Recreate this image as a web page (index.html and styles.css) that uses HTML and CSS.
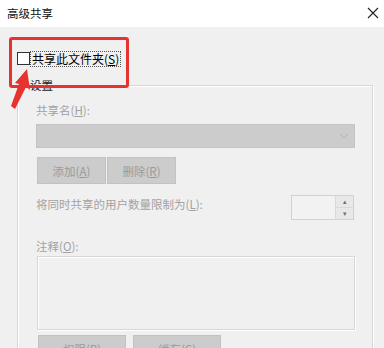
FILE: index.html
```html
<!DOCTYPE html>
<html lang="zh-CN">
<head>
    <meta charset="UTF-8">
    <meta name="viewport" content="width=device-width, initial-scale=1.0">
    <title>高级共享</title>
    <link rel="stylesheet" href="styles.css">
</head>
<body>
    <div class="titlebar">
        <span class="title">高级共享</span>
        <svg class="close" width="12" height="12" viewBox="0 0 12 12">
            <path d="M1 1 L11 11 M11 1 L1 11" stroke="#222" stroke-width="1.1" fill="none"/>
        </svg>
    </div>

    <div class="content">
        <div class="share">
            <span class="check"></span>
            <span class="share-label">共享此文件夹(<u>S</u>)</span>
        </div>

        <fieldset class="group">
            <legend>设置</legend>

            <div class="label">共享名(<u>H</u>):</div>
            <div class="combo">
                <svg width="10" height="6" viewBox="0 0 10 6">
                    <path d="M1 1 L5 5 L9 1" stroke="#b4b4b4" stroke-width="1" fill="none"/>
                </svg>
            </div>

            <div class="btns">
                <div class="btn">添加(<u>A</u>)</div>
                <div class="btn">删除(<u>R</u>)</div>
            </div>

            <div class="limit">
                <span class="label">将同时共享的用户数量限制为(<u>L</u>):</span>
                <div class="spin">
                    <div class="spin-field"></div>
                    <div class="spin-arrows">
                        <span>&#9652;</span>
                        <span>&#9662;</span>
                    </div>
                </div>
            </div>

            <div class="label note">注释(<u>O</u>):</div>
            <div class="memo"></div>

            <div class="btns bottom">
                <div class="btn wide">权限(<u>P</u>)</div>
                <div class="btn wide">缓存(<u>C</u>)</div>
            </div>
        </fieldset>
    </div>

    <!-- annotation -->
    <div class="mark"></div>
    <svg class="arrow" width="40" height="50" viewBox="0 0 40 50">
        <polygon points="27,1 30,22 26,19 15,41 11,38 19,16 15,15" fill="#e8322f"/>
    </svg>
</body>
</html>
```

FILE: styles.css
```css
html, body {
    height: 348px;
    overflow: hidden;
}

body {
    margin: 0;
    width: 384px;
    background: #f0f0f0;
    font-family: "Noto Sans CJK SC", "Microsoft YaHei", sans-serif;
    font-size: 11.5px;
    color: #1a1a1a;
    position: relative;
}

.titlebar {
    height: 27px;
    background: #fff;
    display: flex;
    align-items: center;
    justify-content: space-between;
    padding: 0 5px 0 7px;
}

.title {
    font-size: 11.5px;
    color: #111;
    margin-top: -1px;
}

.close {
    margin-top: -2px;
}

.content {
    height: 321px;
    box-sizing: border-box;
    overflow: hidden;
    padding: 24px 11px 0 17px;
}

.share {
    display: flex;
    align-items: center;
    height: 15px;
}

.check {
    width: 11px;
    height: 11px;
    border: 1px solid #333;
    background: #fff;
}

.share-label {
    margin-left: 1px;
    padding: 0 1px;
    line-height: 14px;
    font-size: 12px;
    color: #000;
    outline: 1px dotted #555;
}

.group {
    margin: 11px 0 0 0;
    padding: 9px 17px 0 18px;
    border: 1px solid #d6d6d6;
    box-shadow: inset 1px 1px 0 #fff, 1px 1px 0 #fff;
    height: 300px;
}

.group legend {
    margin-left: -8px;
    padding: 0 2px;
    line-height: 16px;
    color: #222;
}

.label {
    color: #a2a2a2;
    line-height: 16px;
}

.combo {
    margin-top: 6px;
    height: 24px;
    background: #cccccc;
    border: 1px solid #c4c4c4;
    box-sizing: border-box;
    display: flex;
    align-items: center;
    justify-content: flex-end;
    padding-right: 5px;
}

.btns {
    display: flex;
    gap: 1px;
    margin-top: 9px;
    margin-left: 1px;
}

.btn {
    width: 69px;
    height: 27px;
    box-sizing: border-box;
    background: #cccccc;
    border: 1px solid #c2c2c2;
    color: #9a9a9a;
    display: flex;
    align-items: center;
    justify-content: center;
}

.limit {
    margin-top: 11px;
    display: flex;
    justify-content: space-between;
    align-items: flex-start;
}

.limit .label {
    margin-top: 1px;
}

.spin {
    width: 63px;
    height: 25px;
    display: flex;
    box-sizing: border-box;
    border: 1px solid #d2d2d2;
    background: #f2f2f2;
    margin-right: 1px;
}

.spin-field {
    flex: 1;
}

.spin-arrows {
    width: 17px;
    border-left: 1px solid #d9d9d9;
    display: flex;
    flex-direction: column;
}

.spin-arrows span {
    flex: 1;
    font-size: 7px;
    line-height: 11px;
    text-align: center;
    color: #707070;
    background: #e8e8e8;
}

.spin-arrows span + span {
    border-top: 1px solid #d9d9d9;
}

.note {
    margin-top: 18px;
}

.memo {
    margin-top: 2px;
    margin-left: 1px;
    height: 74px;
    box-sizing: border-box;
    background: #f0f0f0;
    border: 1px solid #d6d6d6;
    box-shadow: inset 1px 1px 0 #fff, 1px 1px 0 #fff;
}

.bottom {
    margin-top: 5px;
    gap: 7px;
    margin-left: 2px;
}

.btn.wide {
    width: 88px;
    align-items: flex-start;
    padding-top: 5px;
}

.mark {
    position: absolute;
    left: 9px;
    top: 37px;
    width: 114px;
    height: 45px;
    border: 3px solid #e53430;
    border-radius: 3px;
}

.arrow {
    position: absolute;
    left: 0;
    top: 68px;
}
```
